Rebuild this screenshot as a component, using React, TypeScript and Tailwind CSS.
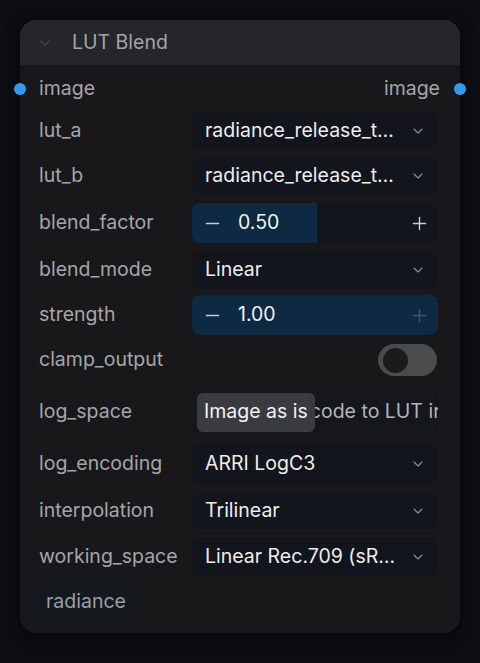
import { ChevronDown, Minus, Plus } from "lucide-react";

const font = { fontFamily: "Inter, 'Noto Sans', sans-serif" };

function Combo({ value, className }: { value: string; className: string }) {
  return (
    <div className={`flex items-center justify-between w-[246px] rounded-lg bg-[#12151c] pl-[13px] pr-[12px] ${className}`}>
      <span className="text-[19.5px] text-[#ededed] truncate">{value}</span>
      <ChevronDown size={16} strokeWidth={1.6} className="text-[#8d8f96] shrink-0" />
    </div>
  );
}

function Stepper({ value, pct, className, plusDim }: { value: string; pct: number; className: string; plusDim?: boolean }) {
  return (
    <div className={`relative w-[246px] rounded-lg bg-[#12151c] overflow-hidden ${className}`}>
      <div className="absolute inset-y-0 left-0 bg-[#0e2a42]" style={{ width: `${pct}%` }} />
      <div className="relative flex items-center h-full pl-[10px] pr-[8px]">
        <Minus size={21} strokeWidth={1.6} className="text-[#c9ccd2]" />
        <span className="ml-[15px] text-[19.5px] text-[#f2f2f2]">{value}</span>
        <Plus size={21} strokeWidth={1.6} className={`ml-auto ${plusDim ? "text-[#3f5468]" : "text-[#c9ccd2]"}`} />
      </div>
    </div>
  );
}

function Label({ children }: { children: string }) {
  return <span className="text-[19.5px] text-[#a4a5aa]">{children}</span>;
}

export default function App() {
  return (
    <div className="w-[480px] h-[663px] bg-[#0c0e13] pt-[20px] pl-[20px]" style={font}>
      <div className="relative w-[440px] h-[613px] rounded-[16px] bg-[#18181b] shadow-[0_4px_14px_rgba(0,0,0,0.6)]">
        <div className="flex items-center h-[45px] rounded-t-[16px] bg-[#25262a] pl-[16px]">
          <ChevronDown size={18} strokeWidth={1.5} className="text-[#44464e]" />
          <span className="ml-[18px] text-[19.5px] text-[#a3a4aa]">LUT Blend</span>
        </div>

        <div className="flex flex-col pl-[19px] pr-[22px] pt-[10px]">
          <div className="relative flex items-center justify-between h-[28px]">
            <span className="absolute -left-[25px] w-[12px] h-[12px] rounded-full bg-[#2f9bf2]" />
            <Label>image</Label>
            <span className="-mr-[2px] text-[19.5px] text-[#a4a5aa]">image</span>
            <span className="absolute -right-[28px] w-[12px] h-[12px] rounded-full bg-[#2f9bf2]" />
          </div>

          <div className="flex items-center justify-between mt-[10px]">
            <Label>lut_a</Label>
            <Combo value="radiance_release_t…" className="h-[36px]" />
          </div>
          <div className="flex items-center justify-between mt-[9px]">
            <Label>lut_b</Label>
            <Combo value="radiance_release_t…" className="h-[36px]" />
          </div>
          <div className="flex items-center justify-between mt-[9px]">
            <Label>blend_factor</Label>
            <Stepper value="0.50" pct={51} className="h-[40px]" />
          </div>
          <div className="flex items-center justify-between mt-[8px]">
            <Label>blend_mode</Label>
            <Combo value="Linear" className="h-[38px]" />
          </div>
          <div className="flex items-center justify-between mt-[6px]">
            <Label>strength</Label>
            <Stepper value="1.00" pct={100} className="h-[40px]" plusDim />
          </div>
          <div className="flex items-center justify-between h-[36px] mt-[7px]">
            <Label>clamp_output</Label>
            <div className="flex items-center w-[59px] h-[32px] rounded-full bg-[#4a4b4d] pl-[5px] mr-[1px]">
              <div className="w-[25px] h-[25px] rounded-full bg-[#1b1b1d]" />
            </div>
          </div>
          <div className="flex items-center justify-between h-[48px] mt-[10px]">
            <Label>log_space</Label>
            <div className="flex items-center w-[246px] h-[48px] rounded-lg bg-[#15171c] overflow-hidden pl-[5px]">
              <span className="relative z-10 flex items-center h-[39px] px-[7px] rounded-[6px] bg-[#3a3b3f] text-[19.5px] text-[#f2f2f2] whitespace-nowrap">
                Image as is
              </span>
              <span className="-ml-[5px] text-[19.5px] text-[#b3b4b8] whitespace-nowrap">code to LUT ir</span>
            </div>
          </div>
          <div className="flex items-center justify-between mt-[8px]">
            <Label>log_encoding</Label>
            <Combo value="ARRI LogC3" className="h-[40px]" />
          </div>
          <div className="flex items-center justify-between mt-[9px]">
            <Label>interpolation</Label>
            <Combo value="Trilinear" className="h-[36px]" />
          </div>
          <div className="flex items-center justify-between mt-[9px]">
            <Label>working_space</Label>
            <Combo value="Linear Rec.709 (sR…" className="h-[38px]" />
          </div>
          <div className="mt-[9px] -ml-[4px]">
            <span className="inline-flex items-center h-[33px] px-[11px] rounded-lg bg-[#141920] text-[19.5px] text-[#9c9ea4]">
              radiance
            </span>
          </div>
        </div>
      </div>
    </div>
  );
}
